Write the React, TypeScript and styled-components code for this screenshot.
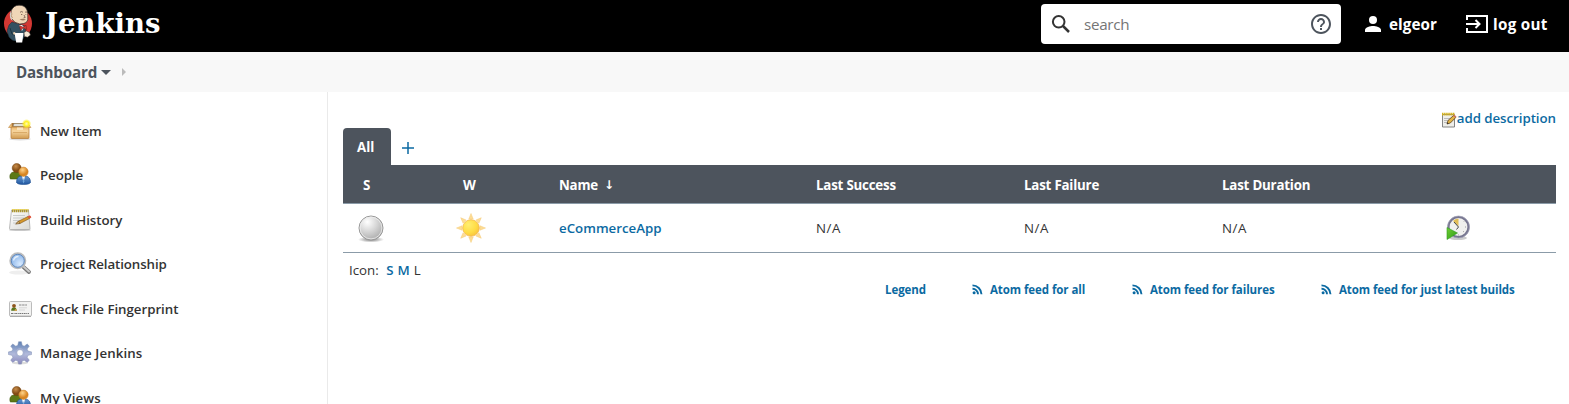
import React from 'react';
import styled, { createGlobalStyle } from 'styled-components';

const GlobalStyle = createGlobalStyle`
  * { box-sizing: border-box; }
  body {
    margin: 0;
    background: #fff;
    color: #333;
    font-family: "Open Sans", "Noto Sans", sans-serif;
    font-size: 13.3px;
    overflow: hidden;
  }
  svg { display: block; flex: none; }
`;

const Page = styled.div`
  display: flex;
  flex-direction: column;
  height: 404px;
  overflow: hidden;
`;

const Header = styled.header`
  display: flex;
  align-items: center;
  height: 52px;
  flex: none;
  background: #000;
  color: #fff;
`;

const Brand = styled.a`
  display: flex;
  align-items: center;
  height: 52px;
  padding: 0 0 5px 3px;
`;

const BrandName = styled.span`
  margin-left: 12px;
  padding-bottom: 2px;
  font: bold 27.5px/36px "DejaVu Serif", serif;
  letter-spacing: 0;
`;

const SearchBox = styled.div`
  display: flex;
  align-items: center;
  width: 300px;
  height: 40px;
  margin: 0 24px 4px auto;
  padding: 0 9px 0 10px;
  border-radius: 4px;
  background: #fff;
`;

const SearchText = styled.span`
  flex: 1;
  padding-left: 11px;
  color: #757575;
  font-size: 15.2px;
  letter-spacing: -0.3px;
`;

const HeaderLink = styled.a<{ $width: number; $gap: number; $spacing: number }>`
  display: flex;
  align-items: center;
  gap: ${(p) => p.$gap}px;
  width: ${(p) => p.$width}px;
  height: 48px;
  margin-bottom: 4px;
  font-size: 15.2px;
  font-weight: 700;
  white-space: nowrap;
  letter-spacing: ${(p) => p.$spacing}px;
`;

const Breadcrumbs = styled.nav`
  display: flex;
  align-items: center;
  height: 40px;
  flex: none;
  padding-left: 16px;
  background: #f8f8f8;
  color: #4d545d;
  font-size: 15.2px;
  font-weight: 700;
  letter-spacing: -0.15px;
`;

const DownCaret = styled.span`
  margin-left: 4px;
  border: 5px solid transparent;
  border-top-color: #4d545d;
  border-bottom: 0;
`;

const RightCaret = styled.span`
  margin-left: 11px;
  border: 4px solid transparent;
  border-left-color: #bbb;
  border-right: 0;
`;

const Body = styled.div`
  display: flex;
  flex: 1;
  min-height: 0;
`;

const Sidebar = styled.aside`
  width: 328px;
  flex: none;
  padding-top: 16.6px;
  border-right: 1px solid #eaeaea;
`;

const Task = styled.a<{ $spacing: number }>`
  display: flex;
  align-items: center;
  gap: 8px;
  height: 44.5px;
  padding-left: 8px;
  color: #333;
  font-weight: 600;
  letter-spacing: ${(p) => p.$spacing}px;
`;

const Main = styled.main`
  flex: 1;
  padding: 16px 13px 0 15px;
`;

const DescriptionLine = styled.div`
  display: flex;
  justify-content: flex-end;
  align-items: center;
  height: 20px;
  color: #0b6aa2;
  font-weight: 600;
  letter-spacing: -0.05px;
`;

const EditNote = styled.span`
  padding-top: 3px;
`;

const TabBar = styled.div`
  display: flex;
  height: 37px;
`;

const Tab = styled.div`
  width: 48px;
  padding-left: 14px;
  border-radius: 4px 4px 0 0;
  background: #4d545d;
  color: #fff;
  font-weight: 700;
  line-height: 38px;
`;

const AddTab = styled.div`
  padding: 14px 0 0 11px;
`;

const TableRow = styled.div<{ $head?: boolean }>`
  display: grid;
  grid-template-columns: 100px 116px 257px 208px 198px 224px 1fr;
  align-items: center;
  height: ${(p) => (p.$head ? 39 : 49)}px;
  border-bottom: 1px solid #8b9ba8;
  background: ${(p) => (p.$head ? '#4d545d' : '#fff')};
  color: ${(p) => (p.$head ? '#fff' : '#333')};
  font-weight: ${(p) => (p.$head ? 700 : 400)};
  letter-spacing: ${(p) => (p.$head ? -0.2 : 0.5)}px;
`;

const Cell = styled.div<{ $indent?: number; $top?: number }>`
  display: flex;
  align-items: center;
  padding: ${(p) => p.$top ?? 0}px 0 0 ${(p) => p.$indent ?? 0}px;
  white-space: nowrap;
`;

const SortArrow = styled.span`
  margin-left: 6px;
  font-family: "DejaVu Sans", sans-serif;
  font-size: 12px;
`;

const JobLink = styled.a`
  color: #0b6aa2;
  font-weight: 600;
  letter-spacing: 0;
`;

const IconSizes = styled.div`
  display: flex;
  height: 26px;
  padding: 7px 0 0 6px;
  line-height: 20px;
`;

const SizeLink = styled.a<{ $current?: boolean }>`
  margin-left: 4px;
  color: ${(p) => (p.$current ? '#333' : '#0b6aa2')};
  font-weight: ${(p) => (p.$current ? 400 : 600)};
`;

const Feeds = styled.div`
  display: flex;
  height: 20px;
  align-items: center;
  color: #0b6aa2;
  font-size: 11.5px;
  font-weight: 700;
  padding-left: 542px;
`;

const Feed = styled.a<{ $width: number }>`
  display: flex;
  align-items: center;
  gap: 7px;
  flex: none;
  width: ${(p) => p.$width}px;
  letter-spacing: -0.07px;
  white-space: nowrap;
`;

const Butler = () => (
  <svg width="30" height="40" viewBox="0 0 30 40">
    <ellipse cx="15" cy="19.5" rx="14" ry="15" fill="#d33833" />
    <path d="M9 18 6 21 4 27 6 33Q9 37 13 37L20 35 23 29 22 22 16 20z" fill="#335061" stroke="#1d2e38" strokeWidth=".5" />
    <path d="m16 21 2 4 1 2 2-4-2-2z" fill="#f4f4f4" />
    <path d="M8.5 6Q11 1.200 16 1.200 22 1 24 6q1 3 .8 8 .5 4-4 5.500l-4 .5Q11 19 9 15q-2-1-1.500-3.500z" fill="#f0d6b7" stroke="#302d2a" strokeWidth=".7" />
    <path d="M8.500 6Q7 9 8.500 13l1 4Q6 14 7 9z" fill="#d8d4cf" />
    <path d="M9.500 10q-2 0-1 3l1.500.5" fill="#f0d6b7" stroke="#8d6b4c" strokeWidth=".5" />
    <path d="M17 8.300q1.800-1.500 3 0m2 0q1-.8 2 0M18 10.500h1.300m3.200 0h.8M21 11l1.200 2.500-1.700.4" fill="none" stroke="#5d4037" strokeWidth=".7" />
    <path d="M16.500 15.800q3-2 6.500 0l-3 .7z" fill="#9c7c62" />
    <path d="m16.500 21.500 3.500 1.700 3-2 .7 4.300-3.700-1.500-2.500 2.500z" fill="#d33833" stroke="#681c1a" strokeWidth=".5" />
    <path d="m7 24 2 6 4 2" stroke="#172f3b" strokeWidth=".8" fill="none" />
    <path d="M11.500 29h9l-1.300 9.500h-6z" fill="#fff" />
    <path d="m21 28.500 2.500-1.500 3 1.500 1 2.500-3 2.200-3-.7z" fill="#f5e7d5" stroke="#302d2a" strokeWidth=".5" />
    <path d="m10 28.500 2.200-.5v2.500h-1.700z" fill="#f0d6b7" />
  </svg>
);

const SearchIcon = () => (
  <svg width="22" height="22" viewBox="0 0 22 22" fill="none" stroke="#333" strokeWidth="2">
    <circle cx="7.7" cy="8.800" r="5.800" />
    <path d="m12 13 6 6" strokeWidth="2.500" />
  </svg>
);

const HelpIcon = () => (
  <svg width="22" height="22" viewBox="0 0 24 24" fill="#4d545d">
    <path d="M11 18h2v-2h-2v2zm1-16C6.48 2 2 6.48 2 12s4.48 10 10 10 10-4.48 10-10S17.52 2 12 2zm0 18c-4.41 0-8-3.59-8-8s3.59-8 8-8 8 3.59 8 8-3.59 8-8 8zm0-14c-2.21 0-4 1.79-4 4h2c0-1.1.9-2 2-2s2 .9 2 2c0 2-3 1.75-3 5h2c0-2.25 3-2.5 3-5 0-2.21-1.79-4-4-4z" transform="translate(12 12) scale(1.09) translate(-12 -12)" />
  </svg>
);

const PersonIcon = () => (
  <svg width="16" height="16" viewBox="0 0 16 16" fill="#fff">
    <circle cx="8" cy="4" r="4" />
    <path d="M0 16v-2c0-2.700 5.300-4 8-4s8 1.300 8 4v2z" />
  </svg>
);

const LogoutIcon = () => (
  <svg width="22" height="18" viewBox="0 0 22 18" fill="none" stroke="#fff" strokeWidth="2">
    <path d="M1 5V1h20v16H1v-4M0 9h13M9.500 5l4 4-4 4" />
  </svg>
);

const BoxIcon = () => (
  <svg width="24" height="24" viewBox="0 0 24 24">
    <defs>
      <linearGradient id="box" x2="0" y2="1"><stop stopColor="#e9b568" /><stop offset=".35" stopColor="#f7d69f" /><stop offset="1" stopColor="#d19b50" /></linearGradient>
      <radialGradient id="spark"><stop stopColor="#fffbc0" /><stop offset=".5" stopColor="#fff022" /><stop offset="1" stopColor="#fff02200" /></radialGradient>
    </defs>
    <ellipse cx="12" cy="20" rx="11" ry="1.500" fill="#ddd" />
    <path d="M4 4h15l1 6H3z" fill="#a7763c" />
    <path d="M6 4.500h12l1 3H5z" fill="#dfe1dc" stroke="#8d805f" strokeWidth=".6" />
    <path d="M3.500 4.500 0.500 8.500h4zM20 4.500l3 4h-4z" fill="#efc179" stroke="#b77c34" strokeWidth=".5" />
    <path d="M3 8h18v10.500q0 1-1 1H4q-1 0-1-1z" fill="url(#box)" stroke="#b47833" strokeWidth=".7" />
    <path d="M9 8.500h6v2.500H9z" fill="#fae3ba" />
    <path d="M5 13.500h14" stroke="#d9aa68" />
    <circle cx="18.500" cy="4.800" r="4.800" fill="url(#spark)" />
  </svg>
);

const PeopleIcon = () => (
  <svg width="24" height="24" viewBox="0 0 24 24">
    <defs>
      <radialGradient id="brown" cx=".4" cy=".3"><stop stopColor="#c98e4b" /><stop offset="1" stopColor="#824b14" /></radialGradient>
      <radialGradient id="orange" cx=".4" cy=".3"><stop stopColor="#ffd48a" /><stop offset="1" stopColor="#d98622" /></radialGradient>
      <linearGradient id="blue" x2="0" y2="1"><stop stopColor="#6797d0" /><stop offset="1" stopColor="#2057a0" /></linearGradient>
    </defs>
    <path d="M2 15.500q-1-6 4-6.500h7q3 2 2 7H4q-2 0-2-.5z" fill="#5d7916" stroke="#3f580b" strokeWidth=".6" />
    <circle cx="8.700" cy="5" r="4.500" fill="url(#brown)" stroke="#75420f" strokeWidth=".5" />
    <path d="M8.500 19.500q0-6 4.500-6.500h5q4.500 1 4.500 6.500-1 2-7 2t-7-2z" fill="url(#blue)" stroke="#1a4c8e" strokeWidth=".6" />
    <path d="m14 13 1.500 6.500L17 13z" fill="#fff" />
    <path d="m15.500 14.500-.7 4 .8 2 .8-2z" fill="#6ba4d9" />
    <circle cx="15.500" cy="8.800" r="4.700" fill="url(#orange)" stroke="#c98232" strokeWidth=".5" />
  </svg>
);

const NotepadIcon = () => (
  <svg width="24" height="24" viewBox="0 0 24 24">
    <defs><linearGradient id="paper" x2="1" y2="1"><stop stopColor="#fff" /><stop offset="1" stopColor="#d9d9d5" /></linearGradient></defs>
    <ellipse cx="12" cy="22" rx="11" ry="1" fill="#c8c8c8" />
    <path d="M3.500 2h17l1.500 18.500q0 1-1 1H2.500q-1 0-1-1z" fill="url(#paper)" stroke="#aaa" strokeWidth=".8" />
    <path d="M4 2.800h16.500" stroke="#ab9530" strokeWidth="2.800" strokeDasharray="1.500 .5" />
    <path d="M4 1.500h16.500" stroke="#ecd34c" strokeWidth="1" strokeDasharray="1.500 .5" />
    <path d="M5 7.500h12M5 10h11M5 12.500h8M5 15h4" stroke="#c9cccc" />
    <path d="m8 15.500 2.500-2.300L20 8.500l1.500 2-9.500 5z" fill="#d7992b" stroke="#79501c" strokeWidth=".6" />
    <path d="m19.500 8.500 1.800-1q1.700-.3 2 2l-1.800 1.200z" fill="#e0553c" />
    <path d="m10.500 13.200-3 3 4.500-.7z" fill="#d5b070" stroke="#5e4727" strokeWidth=".5" />
  </svg>
);

const EditNoteIcon = () => (
  <svg width="16" height="16" viewBox="0 0 16 16">
    <path d="M1.500 2.500h12v12.500H1.500z" fill="#eeeeea" stroke="#777" strokeWidth=".9" />
    <path d="M1 2.200h13" stroke="#d4b21c" strokeWidth="2.800" strokeDasharray="1.500 .6" />
    <path d="M3 6.500h7M3 8.500h6M3 10.500h4" stroke="#bbb" />
    <path d="m6 12 1-3.500L12.500 3.500l2.300 2-5.500 5.500z" fill="#e3b344" stroke="#5b4220" strokeWidth=".8" />
    <path d="m12 4 1.300-1.300L15.500 4.500l-1.200 1.300z" fill="#cf7561" />
    <path d="m6 12 .6-1.600 1 1z" fill="#222" />
  </svg>
);

const LensIcon = () => (
  <svg width="24" height="24" viewBox="0 0 24 24">
    <defs><radialGradient id="lens" cx=".65" cy=".7"><stop stopColor="#d8eaff" /><stop offset="1" stopColor="#9cc1ee" /></radialGradient></defs>
    <ellipse cx="11" cy="20.500" rx="10" ry="2" fill="#eee" />
    <path d="m15.500 15 5.500 5" stroke="#777" strokeWidth="3.800" strokeLinecap="round" />
    <path d="m15.500 14.500 5.500 5" stroke="#c9c9c9" strokeWidth="2" strokeLinecap="round" />
    <circle cx="9.800" cy="8.800" r="7.600" fill="url(#lens)" stroke="#bbb" strokeWidth="1.800" />
    <circle cx="9.800" cy="8.800" r="6.500" fill="none" stroke="#5e87bc" strokeWidth="1" />
    <path d="M5.500 8.500q1-4 5-4" stroke="#e4f0fc" fill="none" strokeWidth="1.300" />
  </svg>
);

const CardIcon = () => (
  <svg width="24" height="24" viewBox="0 0 24 24">
    <rect x="1.500" y="4.500" width="22" height="14.500" rx="1" fill="#f3f3f2" stroke="#bbb" />
    <path d="M2 19.500h21" stroke="#aaa" />
    <path d="M3.200 13.800q0-3.500 2.800-3.500 2.500 0 2.800 3.500z" fill="#57761d" />
    <circle cx="6" cy="8.800" r="1.900" fill="#8d541b" />
    <path d="M6.500 14q0-2 1-2t1.500 2z" fill="#d8a14c" />
    <path d="M11 8h8" stroke="#888" strokeWidth="1.200" strokeDasharray="2.500 .6" />
    <path d="M11 10.800h8M11 13h6" stroke="#d5d5d5" />
    <path d="M3 16.500h18" stroke="#777" strokeWidth="1.200" strokeDasharray="2 .6 1 .6" />
  </svg>
);

const GearIcon = () => (
  <svg width="24" height="24" viewBox="0 0 24 24">
    <defs><linearGradient id="gear" x2="0" y2="1"><stop stopColor="#5d80b3" /><stop offset=".55" stopColor="#b3bbdc" /><stop offset="1" stopColor="#8886ba" /></linearGradient></defs>
    <ellipse cx="12" cy="22" rx="8" ry="1.500" fill="#ddd" />
    <path d="M10.600.700h2.800l.8 3.600 2 .9 3-2.200 2.100 2.100-2.200 3 .9 2 3.600.8v2.600l-3.600.8-.9 2 2.200 3-2.100 2.100-3-2.200-2 .9-.8 3h-2.800l-.8-3-2-.9-3 2.200-2.100-2.100 2.200-3-.9-2-3.600-.8v-2.600l3.600-.8.900-2-2.200-3 2.100-2.100 3 2.200 2-.9zM12 8.600a3.200 3.200 0 1 0 0 6.400 3.200 3.200 0 0 0 0-6.400z" fillRule="evenodd" fill="url(#gear)" stroke="#8190b5" strokeWidth=".5" />
    <circle cx="12" cy="11.800" r="4.200" fill="none" stroke="#a5afd2" strokeWidth="1" />
  </svg>
);

const BallIcon = () => (
  <svg width="28" height="28" viewBox="0 0 28 28">
    <defs>
      <radialGradient id="ball" cx=".35" cy=".25" r=".8"><stop stopColor="#fff" /><stop offset=".5" stopColor="#d6d6d6" /><stop offset="1" stopColor="#aaa" /></radialGradient>
      <radialGradient id="shade"><stop stopColor="#777" /><stop offset="1" stopColor="#7770" /></radialGradient>
    </defs>
    <ellipse cx="14" cy="24.500" rx="13" ry="3" fill="url(#shade)" />
    <circle cx="14" cy="13" r="12" fill="url(#ball)" stroke="#999" strokeWidth="1" />
    <circle cx="14" cy="13" r="10.900" fill="none" stroke="#eee" strokeWidth=".8" />
  </svg>
);

const SunIcon = () => (
  <svg width="30" height="30" viewBox="-15 -15 30 30">
    <defs><radialGradient id="sun" cx=".35" cy=".3" r=".8"><stop stopColor="#ffee70" /><stop offset=".6" stopColor="#ffdc45" /><stop offset="1" stopColor="#f7bd3a" /></radialGradient></defs>
    {[0, 45, 90, 135, 180, 225, 270, 315].map((a) => (
      <path key={a} d="M-2.200-9 0-14.500 2.200-9z" fill="#fddc94" stroke="#f5cc7c" strokeWidth=".5" transform={`rotate(${a})`} />
    ))}
    <circle r="8.300" fill="url(#sun)" stroke="#f5b64c" strokeWidth=".8" />
  </svg>
);

const ClockIcon = () => (
  <svg width="24" height="26" viewBox="0 0 24 26">
    <defs><linearGradient id="play" x2="1" y2="1"><stop stopColor="#6fd035" /><stop offset="1" stopColor="#2f9a14" /></linearGradient></defs>
    <ellipse cx="12" cy="23" rx="9" ry="2" fill="#ccc" />
    <circle cx="12.500" cy="12" r="10" fill="#f0f0ee" stroke="#777690" strokeWidth="2.200" />
    <circle cx="12.500" cy="12" r="11" fill="none" stroke="#a4a4b7" strokeWidth=".7" />
    <path d="M12.500 11 7 6q2-2.500 5.500-2.500z" fill="#e1bd57" />
    <path d="m8 7 4.500 5-2 2.500" fill="none" stroke="#444" strokeWidth="1" />
    <path d="M20 12h-1M18 17l-.8-.7M18 6.500l-.5.500M12.500 19.500v1" stroke="#999" />
    <path d="M1 12.500 11.500 18 1 24.500z" fill="url(#play)" stroke="#2f9a20" strokeWidth=".6" />
  </svg>
);

const FeedIcon = () => (
  <svg width="11" height="11" viewBox="0 0 11 11" fill="none" stroke="#0b6aa2" strokeWidth="1.900">
    <circle cx="2.100" cy="8.700" r="1.500" fill="#0b6aa2" stroke="none" />
    <path d="M.5 4.800a5.400 5.400 0 0 1 5.500 5.400M.5 1.400a9 9 0 0 1 9 8.800" />
  </svg>
);

const tasks = [
  { label: 'New Item', icon: <BoxIcon />, spacing: -0.05 },
  { label: 'People', icon: <PeopleIcon />, spacing: -0.1 },
  { label: 'Build History', icon: <NotepadIcon />, spacing: -0.03 },
  { label: 'Project Relationship', icon: <LensIcon />, spacing: -0.1 },
  { label: 'Check File Fingerprint', icon: <CardIcon />, spacing: -0.04 },
  { label: 'Manage Jenkins', icon: <GearIcon />, spacing: 0.1 },
  { label: 'My Views', icon: <PeopleIcon />, spacing: 0.15 },
];

export default function App() {
  return (
    <Page>
      <GlobalStyle />
      <Header>
        <Brand>
          <Butler />
          <BrandName>Jenkins</BrandName>
        </Brand>
        <SearchBox>
          <SearchIcon />
          <SearchText>search</SearchText>
          <HelpIcon />
        </SearchBox>
        <HeaderLink $width={101} $gap={8} $spacing={0.1}><PersonIcon />elgeor</HeaderLink>
        <HeaderLink $width={103} $gap={5} $spacing={0.3}><LogoutIcon />log out</HeaderLink>
      </Header>
      <Breadcrumbs>
        Dashboard
        <DownCaret />
        <RightCaret />
      </Breadcrumbs>
      <Body>
        <Sidebar>
          {tasks.map((t) => (
            <Task key={t.label} $spacing={t.spacing}>{t.icon}{t.label}</Task>
          ))}
        </Sidebar>
        <Main>
          <DescriptionLine><EditNote><EditNoteIcon /></EditNote>add description</DescriptionLine>
          <TabBar>
            <Tab>All</Tab>
            <AddTab>
              <svg width="12" height="12" viewBox="0 0 12 12" stroke="#0b6aa2" strokeWidth="1.500"><path d="M6 0v12M0 6h12" /></svg>
            </AddTab>
          </TabBar>
          <TableRow $head>
            <Cell $indent={20} $top={2}>S</Cell>
            <Cell $indent={20} $top={2}>W</Cell>
            <Cell $top={2}>Name<SortArrow>↓</SortArrow></Cell>
            <Cell $top={2}>Last Success</Cell>
            <Cell $top={2}>Last Failure</Cell>
            <Cell $top={2}>Last Duration</Cell>
            <Cell />
          </TableRow>
          <TableRow>
            <Cell $indent={14} $top={2}><BallIcon /></Cell>
            <Cell $indent={13}><SunIcon /></Cell>
            <Cell><JobLink>eCommerceApp</JobLink></Cell>
            <Cell>N/A</Cell>
            <Cell>N/A</Cell>
            <Cell>N/A</Cell>
            <Cell><ClockIcon /></Cell>
          </TableRow>
          <IconSizes>
            Icon:&nbsp;
            <SizeLink>S</SizeLink>
            <SizeLink>M</SizeLink>
            <SizeLink $current>L</SizeLink>
          </IconSizes>
          <Feeds>
            <Feed $width={87}>Legend</Feed>
            <Feed $width={160}><FeedIcon />Atom feed for all</Feed>
            <Feed $width={189}><FeedIcon />Atom feed for failures</Feed>
            <Feed $width={200}><FeedIcon />Atom feed for just latest builds</Feed>
          </Feeds>
        </Main>
      </Body>
    </Page>
  );
}
